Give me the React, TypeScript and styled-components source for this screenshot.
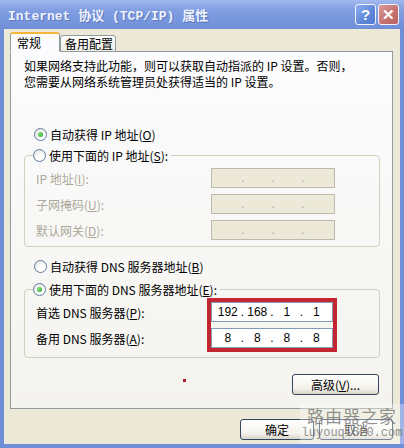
import React from 'react';
import styled, { createGlobalStyle } from 'styled-components';

const GlobalStyle = createGlobalStyle`
    html, body {
        margin: 0;
        padding: 0;
        background: #ffffff;
    }
    body {
        font-family: "Noto Sans CJK SC", "Liberation Sans", sans-serif;
        font-size: 12px;
        color: #000000;
    }
`;

const Window = styled.div`
    position: relative;
    width: 404px;
    height: 448px;
    box-sizing: border-box;
    display: flex;
    flex-direction: column;
    background: #6e8ed8;
    overflow: hidden;
`;

const TitleBar = styled.div`
    flex: none;
    height: 29px;
    display: flex;
    align-items: center;
    padding: 0 5px 0 8px;
    background: linear-gradient(#a2b9ee, #819ee2 35%, #7594dc 80%, #6f8ed8);
`;

const Title = styled.div`
    flex: 1;
    font-family: "Liberation Mono", "Noto Sans CJK SC", monospace;
    font-size: 13px;
    font-weight: bold;
    color: #eef2fb;
    text-shadow: 1px 1px 0 #5b78bf;
    white-space: pre;
`;

const TitleButton = styled.div<{ $kind: 'help' | 'close' }>`
    width: 19px;
    height: 19px;
    margin-left: 2px;
    border: 1px solid #f2f4fa;
    border-radius: 3px;
    display: flex;
    align-items: center;
    justify-content: center;
    color: #ffffff;
    font-family: "Liberation Sans", sans-serif;
    font-weight: bold;
    font-size: 15px;
    background: ${(p) =>
        p.$kind === 'close'
            ? 'linear-gradient(135deg, #d99a98, #c4706f 60%, #b86464)'
            : 'linear-gradient(135deg, #8eaef0, #5f86d8 60%, #5079d0)'};
`;

const Body = styled.div`
    flex: 1;
    margin: 0 4px 4px;
    padding: 4px 7px 0 6px;
    background: #ece9d8;
    display: flex;
    flex-direction: column;
`;

const Tabs = styled.div`
    position: relative;
    z-index: 1;
    height: 19px;
    display: flex;
    align-items: flex-end;
    margin-bottom: -1px;
`;

const Tab = styled.div<{ $active?: boolean }>`
    box-sizing: border-box;
    height: ${(p) => (p.$active ? '20px' : '17px')};
    width: ${(p) => (p.$active ? '50px' : '56px')};
    padding-left: ${(p) => (p.$active ? '6px' : '4px')};
    border: 1px solid #919b9c;
    border-bottom: ${(p) => (p.$active ? '1px solid #fcfcfe' : '1px solid #919b9c')};
    border-top: ${(p) => (p.$active ? '2px solid #f5b63a' : '1px solid #919b9c')};
    border-radius: 3px 3px 0 0;
    background: ${(p) => (p.$active ? '#fcfcfe' : 'linear-gradient(#ffffff, #eeede5)')};
    font-size: 12px;
    line-height: 15px;
    display: flex;
    align-items: center;
`;

const Panel = styled.div`
    position: relative;
    box-sizing: border-box;
    height: 358px;
    border: 1px solid #919b9c;
    background: linear-gradient(#fcfcfe, #f4f3ee);
    padding: 6px 12px 0 13px;
    display: flex;
    flex-direction: column;
`;

const Intro = styled.p`
    margin: 0;
    line-height: 16px;
    white-space: nowrap;
`;

const RadioRow = styled.div<{ $top: number }>`
    display: flex;
    align-items: center;
    height: 16px;
    margin: ${(p) => p.$top}px 0 0 10px;
    gap: 3px;
    white-space: nowrap;
`;

const RadioDot = styled.span<{ $on?: boolean }>`
    box-sizing: border-box;
    width: 13px;
    height: 13px;
    flex: none;
    border-radius: 50%;
    border: 1px solid #5d7a9c;
    background: radial-gradient(circle at 65% 70%, #ffffff 30%, #dcdbd5 100%);
    display: flex;
    align-items: center;
    justify-content: center;
    &::after {
        content: '';
        display: ${(p) => (p.$on ? 'block' : 'none')};
        width: 5px;
        height: 5px;
        border-radius: 50%;
        background: radial-gradient(circle at 35% 35%, #7ae17a, #26a326);
    }
`;

const Group = styled.fieldset<{ $top: number; $bottom: number; $pt: number }>`
    margin: ${(p) => p.$top}px 0 0 0;
    padding: ${(p) => p.$pt}px 8px ${(p) => p.$bottom}px 8px;
    min-width: 0;
    border: 1px solid #d0d0bf;
    border-radius: 4px;
`;

const Legend = styled.legend`
    padding: 0 3px 0 0;
    display: flex;
    align-items: center;
    gap: 3px;
    height: 16px;
    white-space: nowrap;
`;

const Rows = styled.div`
    display: flex;
    flex-direction: column;
    gap: 6px;
`;

const Row = styled.div`
    display: flex;
    align-items: center;
    height: 20px;
`;

const Label = styled.span<{ $disabled?: boolean; $width: number }>`
    box-sizing: border-box;
    width: ${(p) => p.$width}px;
    padding-left: 3px;
    color: ${(p) => (p.$disabled ? '#aca899' : '#000000')};
    white-space: nowrap;
`;

const AddressBox = styled.div<{ $disabled?: boolean; $width: number }>`
    box-sizing: border-box;
    width: ${(p) => p.$width}px;
    height: 20px;
    border: 1px solid ${(p) => (p.$disabled ? '#bdbaad' : '#7f9db9')};
    background: ${(p) => (p.$disabled ? '#ece9d8' : '#ffffff')};
    color: ${(p) => (p.$disabled ? '#aca899' : '#000000')};
    display: flex;
    align-items: center;
    padding: 0 4px;
    font-family: "Liberation Sans", sans-serif;
    font-size: 12px;
`;

const Octet = styled.span`
    flex: 1;
    text-align: center;
`;

const Dot = styled.span`
    width: 6px;
    text-align: center;
`;

const DnsBody = styled.div`
    display: flex;
    align-items: flex-start;
`;

const DnsLabels = styled.div`
    display: flex;
    flex-direction: column;
    gap: 6px;
    padding-top: 4px;
`;

const Highlight = styled.div`
    display: flex;
    flex-direction: column;
    gap: 6px;
    border: 4px solid #c42631;
`;

const Button = styled.div<{ $width: number }>`
    box-sizing: border-box;
    width: ${(p) => p.$width}px;
    height: 21px;
    border: 1px solid #33465e;
    border-radius: 3px;
    background: linear-gradient(#ffffff, #f3f2ec 70%, #d8d4c8);
    display: flex;
    align-items: center;
    justify-content: center;
    font-size: 12px;
    white-space: nowrap;
`;

const AdvancedRow = styled.div`
    display: flex;
    justify-content: flex-end;
    margin: 16px 1px 0 0;
`;

const Marker = styled.span`
    position: absolute;
    left: 172px;
    top: 327px;
    width: 3px;
    height: 3px;
    background: #b02030;
`;

const Footer = styled.div`
    display: flex;
    justify-content: flex-end;
    gap: 5px;
    margin-top: 10px;
`;

const Watermark = styled.div`
    position: absolute;
    right: 0;
    bottom: 4px;
    width: 104px;
    height: 40px;
    background: rgba(255, 255, 255, 0.35);
    display: flex;
    flex-direction: column;
    align-items: center;
    pointer-events: none;
    color: rgba(110, 110, 110, 0.75);
`;

const WatermarkName = styled.span`
    font-size: 17px;
    line-height: 20px;
    letter-spacing: 1px;
    margin-top: 2px;
`;

const WatermarkUrl = styled.span`
    font-family: "Liberation Mono", monospace;
    font-size: 12px;
    line-height: 14px;
`;

const Ip = ({ parts, disabled, width }: { parts: string[]; disabled?: boolean; width: number }) => (
    <AddressBox $disabled={disabled} $width={width}>
        {parts.map((part, i) => (
            <React.Fragment key={i}>
                {i > 0 && <Dot>.</Dot>}
                <Octet>{part}</Octet>
            </React.Fragment>
        ))}
    </AddressBox>
);

const empty = ['', '', '', ''];

export default function App() {
    return (
        <>
            <GlobalStyle />
            <Window>
                <TitleBar>
                    <Title>Internet 协议 (TCP/IP) 属性</Title>
                    <TitleButton $kind="help">?</TitleButton>
                    <TitleButton $kind="close">✕</TitleButton>
                </TitleBar>
                <Body>
                    <Tabs>
                        <Tab $active>常规</Tab>
                        <Tab>备用配置</Tab>
                    </Tabs>
                    <Panel>
                        <Intro>
                            如果网络支持此功能，则可以获取自动指派的 IP 设置。否则，
                            <br />
                            您需要从网络系统管理员处获得适当的 IP 设置。
                        </Intro>

                        <RadioRow $top={36}>
                            <RadioDot $on />
                            <span>自动获得 IP 地址(<u>O</u>)</span>
                        </RadioRow>

                        <Group $top={5} $pt={5} $bottom={6}>
                            <Legend>
                                <RadioDot />
                                <span>使用下面的 IP 地址(<u>S</u>):</span>
                            </Legend>
                            <Rows>
                                <Row>
                                    <Label $disabled $width={178}>IP 地址(<u>I</u>):</Label>
                                    <Ip parts={empty} disabled width={124} />
                                </Row>
                                <Row>
                                    <Label $disabled $width={178}>子网掩码(<u>U</u>):</Label>
                                    <Ip parts={empty} disabled width={124} />
                                </Row>
                                <Row>
                                    <Label $disabled $width={178}>默认网关(<u>D</u>):</Label>
                                    <Ip parts={empty} disabled width={124} />
                                </Row>
                            </Rows>
                        </Group>

                        <RadioRow $top={11}>
                            <RadioDot />
                            <span>自动获得 DNS 服务器地址(<u>B</u>)</span>
                        </RadioRow>

                        <Group $top={7} $pt={1} $bottom={5}>
                            <Legend>
                                <RadioDot $on />
                                <span>使用下面的 DNS 服务器地址(<u>E</u>):</span>
                            </Legend>
                            <DnsBody>
                                <DnsLabels>
                                    <Row>
                                        <Label $width={174}>首选 DNS 服务器(<u>P</u>):</Label>
                                    </Row>
                                    <Row>
                                        <Label $width={174}>备用 DNS 服务器(<u>A</u>):</Label>
                                    </Row>
                                </DnsLabels>
                                <Highlight>
                                    <Ip parts={['192', '168', '1', '1']} width={122} />
                                    <Ip parts={['8', '8', '8', '8']} width={122} />
                                </Highlight>
                            </DnsBody>
                        </Group>

                        <AdvancedRow>
                            <Button $width={87}>高级(<u>V</u>)...</Button>
                        </AdvancedRow>

                        <Marker />
                    </Panel>

                    <Footer>
                        <Button $width={74}>确定</Button>
                        <Button $width={74}>取消</Button>
                    </Footer>
                </Body>
                <Watermark>
                    <WatermarkName>路由器之家</WatermarkName>
                    <WatermarkUrl>luyouqi520.com</WatermarkUrl>
                </Watermark>
            </Window>
        </>
    );
}
